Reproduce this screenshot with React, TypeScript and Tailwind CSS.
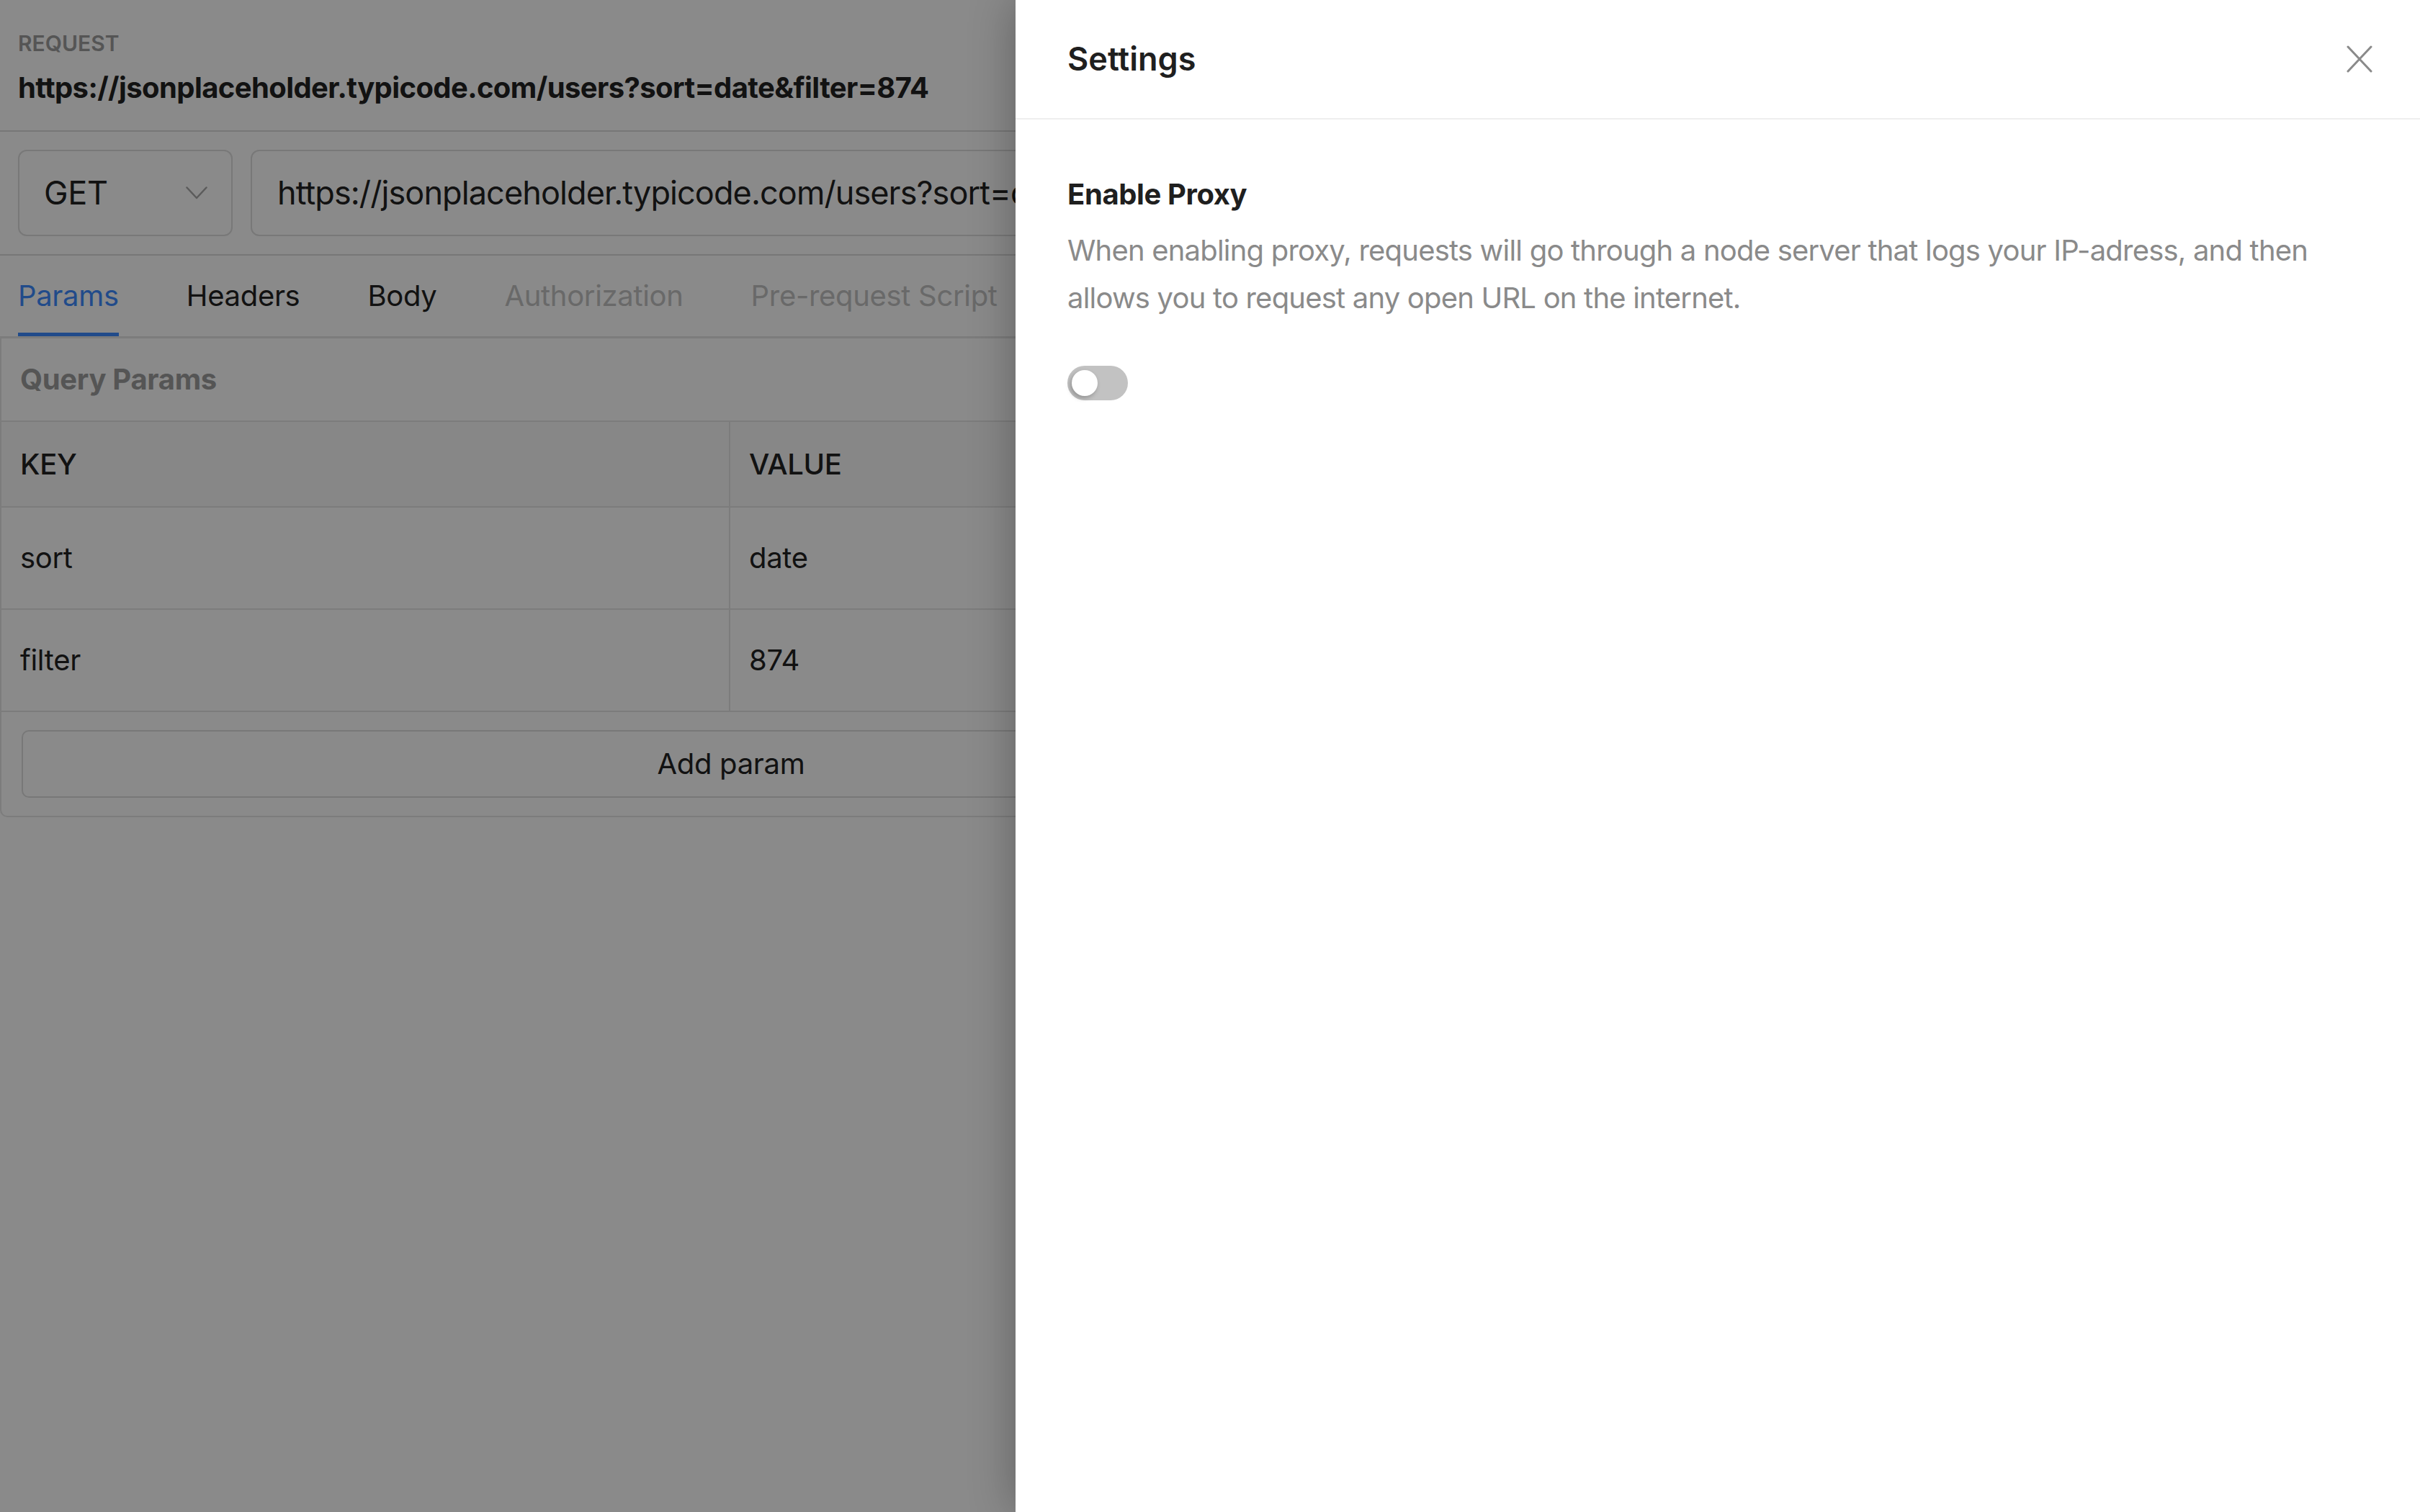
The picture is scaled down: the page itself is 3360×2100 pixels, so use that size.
import React from "react";

function Chevron() {
  return (
    <svg width="30" height="18" viewBox="0 0 30 18" fill="none">
      <path d="M1.5 1.5 L15 16 L28.5 1.5" stroke="#a8a8a8" strokeWidth="2.5" strokeLinecap="round" strokeLinejoin="round" />
    </svg>
  );
}

function CloseIcon() {
  return (
    <svg width="36" height="38" viewBox="0 0 36 38" fill="none">
      <path d="M2 2 L34 36 M34 2 L2 36" stroke="#8a8a8a" strokeWidth="3" strokeLinecap="round" />
    </svg>
  );
}

export default function App() {
  const url = "https://jsonplaceholder.typicode.com/users?sort=date&filter=874";
  const tabs = [
    { label: "Params", cls: "text-[#3d8bff] border-[#3d8bff]" },
    { label: "Headers", cls: "text-[#222222] border-transparent" },
    { label: "Body", cls: "text-[#222222] border-transparent" },
    { label: "Authorization", cls: "text-[#c2c2c2] border-transparent" },
    { label: "Pre-request Script", cls: "text-[#c2c2c2] border-transparent" },
  ];
  const rows = [
    ["sort", "date"],
    ["filter", "874"],
  ];
  return (
    <div className="relative w-[3360px] h-[2100px] overflow-hidden bg-white font-['Inter',sans-serif] text-[#222222]">
      {/* Underlying request panel */}
      <div className="flex flex-col w-[2030px] tracking-[-0.02em]">
        <div className="px-[25px] pt-[40px] pb-[31px] border-b-2 border-[#dcdcdc]">
          <div className="text-[30px] leading-[40px] font-semibold text-[#9e9e9e] uppercase tracking-normal">Request</div>
          <div className="mt-[14px] text-[40px] leading-[56px] font-bold text-[#222222] whitespace-nowrap tracking-[-0.015em]">{url}</div>
        </div>

        <div className="flex gap-[25px] px-[25px] py-[25px] border-b-2 border-[#dcdcdc]">
          <div className="w-[298px] h-[120px] shrink-0 border-2 border-[#dedede] rounded-[12px] flex items-center justify-between pl-[34px] pr-[33px]">
            <span className="text-[45px] leading-[56px]">GET</span>
            <Chevron />
          </div>
          <div className="flex-1 h-[120px] border-2 border-[#dedede] rounded-[12px] flex items-center pl-[35px] overflow-hidden">
            <input
              readOnly
              value={url}
              className="w-full bg-transparent outline-none border-0 p-0 text-[45px] leading-[56px] text-[#222222] tracking-[-0.02em] font-['Inter',sans-serif]"
            />
          </div>
        </div>

        <div className="flex gap-[94px] px-[25px] border-b-[3px] border-[#e6e6e6]">
          {tabs.map((t) => (
            <div key={t.label} className={`pt-[28px] pb-[23px] border-b-[5px] text-[40px] leading-[56px] whitespace-nowrap ${t.cls}`}>
              {t.label}
            </div>
          ))}
        </div>

        <div className="border-x-2 border-b-2 border-[#e6e6e6] rounded-b-[10px] flex flex-col">
          <div className="h-[116px] flex items-center pl-[26px] text-[40px] font-bold text-[#9e9e9e] border-b-2 border-[#e6e6e6]">
            Query Params
          </div>
          <div className="grid grid-cols-[1012px_1fr] h-[119px] border-b-2 border-[#e6e6e6] bg-[#fafafa]">
            <div className="flex items-center pl-[26px] border-r-2 border-[#e6e6e6] text-[40px] font-medium">KEY</div>
            <div className="flex items-center pl-[26px] text-[40px] font-medium">VALUE</div>
          </div>
          {rows.map(([k, v]) => (
            <div key={k} className="grid grid-cols-[1012px_1fr] h-[142px] border-b-2 border-[#e6e6e6]">
              <div className="flex items-center pl-[26px] border-r-2 border-[#e6e6e6] text-[40px]">{k}</div>
              <div className="flex items-center pl-[26px] text-[40px]">{v}</div>
            </div>
          ))}
          <div className="px-[28px] pt-[25px] pb-[25px]">
            <div className="h-[94px] border-2 border-[#dedede] rounded-[10px] flex items-center justify-center text-[40px]">
              Add param
            </div>
          </div>
        </div>
      </div>

      {/* Overlay */}
      <div className="absolute inset-0 bg-[rgba(0,0,0,0.46)]" />

      {/* Drawer */}
      <div className="absolute right-0 top-0 bottom-0 w-[1950px] bg-white shadow-[0_0_60px_rgba(0,0,0,0.3)] flex flex-col">
        <div className="h-[166px] shrink-0 flex items-center justify-between pl-[72px] pr-[66px] border-b-2 border-[#eeeeee]">
          <span className="text-[45px] leading-[60px] font-semibold text-[#1f1f1f]">Settings</span>
          <CloseIcon />
        </div>
        <div className="px-[72px] pt-[74px] flex flex-col items-start">
          <div className="text-[40px] leading-[60px] font-bold text-[#1f1f1f] tracking-[-0.01em]">Enable Proxy</div>
          <p className="mt-[15px] text-[40px] leading-[66px] text-[#8a8a8a] tracking-[-0.02em]">
            When enabling proxy, requests will go through a node server that logs your IP-adress, and then allows you to request any open URL on the internet.
          </p>
          <div className="mt-[61px] w-[84px] h-[48px] rounded-full bg-[#c2c2c2] p-[6px] flex items-center">
            <div className="w-[36px] h-[36px] rounded-full bg-white shadow-[-2px_3px_6px_rgba(0,0,0,0.25)]" />
          </div>
        </div>
      </div>
    </div>
  );
}
